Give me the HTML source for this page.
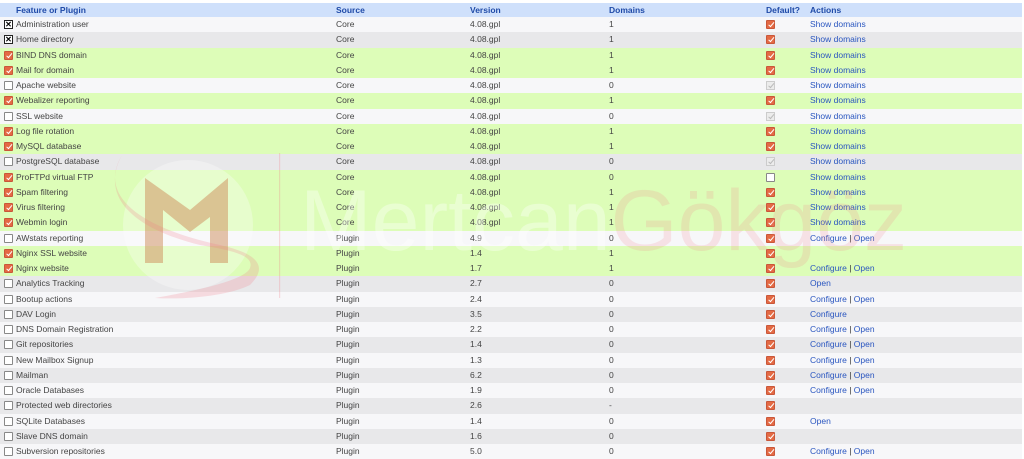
<!DOCTYPE html>
<html><head><meta charset="utf-8">
<style>
body{margin:0;width:1024px;height:458px;background:#fff;font-family:"Liberation Sans",sans-serif;font-size:8.5px;color:#444;position:relative;overflow:hidden}
.r{position:absolute;left:0;width:1022px;height:15.25px;line-height:15px}
.w{background:#f7f7f9}.g{background:#e8e8ea}.gr{background:#ddfdb8}
.h{top:3px;height:14px;line-height:14px;background:#cfe0fb;color:#1f4aa8;font-weight:bold;font-size:8.5px}
.c{position:absolute;white-space:nowrap}
.a{left:16px}.b{left:336px}.v{left:470px}.d{left:609px}.df{left:766px}.ac{left:810px;color:#2a56c0}
.cb{position:absolute;left:4px;top:3px;width:9px;height:9px;box-sizing:border-box}
.cd{left:766px}
.ck{background:#e46a44;border:1px solid #c9573a;border-radius:1px}
.ck:after{content:"";position:absolute;left:2.5px;top:0px;width:2px;height:4.5px;border:solid #fff;border-width:0 1.3px 1.3px 0;transform:rotate(40deg)}
.x{border:1px solid #222;background:#fff;font-size:8px;line-height:7px;text-align:center;font-weight:bold;color:#000}
.e{border:1px solid #888;background:#fff;border-radius:1px}
.dis{background:#ececec;border:1px solid #ccc}
.dis:after{content:"";position:absolute;left:2.5px;top:0px;width:2px;height:4.5px;border:solid #bbb;border-width:0 1.3px 1.3px 0;transform:rotate(40deg)}
.wm{position:absolute;left:300px;top:178px;font-size:86px;line-height:86px;color:rgba(255,255,255,0.35);font-family:"Liberation Sans",sans-serif;pointer-events:none;white-space:nowrap}
</style></head><body>
<div class="r h"><span class="c a">Feature or Plugin</span><span class="c b">Source</span><span class="c v">Version</span><span class="c d">Domains</span><span class="c df">Default?</span><span class="c ac" style="color:#1f4aa8">Actions</span></div>

<div class="r w" style="top:17px"><span class="cb x">✕</span><span class="c a">Administration user</span><span class="c b">Core</span><span class="c v">4.08.gpl</span><span class="c d">1</span><span class="cb cd ck"></span><span class="c ac">Show domains</span></div>
<div class="r g" style="top:32.25px"><span class="cb x">✕</span><span class="c a">Home directory</span><span class="c b">Core</span><span class="c v">4.08.gpl</span><span class="c d">1</span><span class="cb cd ck"></span><span class="c ac">Show domains</span></div>
<div class="r gr" style="top:47.5px"><span class="cb ck"></span><span class="c a">BIND DNS domain</span><span class="c b">Core</span><span class="c v">4.08.gpl</span><span class="c d">1</span><span class="cb cd ck"></span><span class="c ac">Show domains</span></div>
<div class="r gr" style="top:62.75px"><span class="cb ck"></span><span class="c a">Mail for domain</span><span class="c b">Core</span><span class="c v">4.08.gpl</span><span class="c d">1</span><span class="cb cd ck"></span><span class="c ac">Show domains</span></div>
<div class="r w" style="top:78px"><span class="cb e"></span><span class="c a">Apache website</span><span class="c b">Core</span><span class="c v">4.08.gpl</span><span class="c d">0</span><span class="cb cd dis"></span><span class="c ac">Show domains</span></div>
<div class="r gr" style="top:93.25px"><span class="cb ck"></span><span class="c a">Webalizer reporting</span><span class="c b">Core</span><span class="c v">4.08.gpl</span><span class="c d">1</span><span class="cb cd ck"></span><span class="c ac">Show domains</span></div>
<div class="r w" style="top:108.5px"><span class="cb e"></span><span class="c a">SSL website</span><span class="c b">Core</span><span class="c v">4.08.gpl</span><span class="c d">0</span><span class="cb cd dis"></span><span class="c ac">Show domains</span></div>
<div class="r gr" style="top:123.75px"><span class="cb ck"></span><span class="c a">Log file rotation</span><span class="c b">Core</span><span class="c v">4.08.gpl</span><span class="c d">1</span><span class="cb cd ck"></span><span class="c ac">Show domains</span></div>
<div class="r gr" style="top:139px"><span class="cb ck"></span><span class="c a">MySQL database</span><span class="c b">Core</span><span class="c v">4.08.gpl</span><span class="c d">1</span><span class="cb cd ck"></span><span class="c ac">Show domains</span></div>
<div class="r g" style="top:154.25px"><span class="cb e"></span><span class="c a">PostgreSQL database</span><span class="c b">Core</span><span class="c v">4.08.gpl</span><span class="c d">0</span><span class="cb cd dis"></span><span class="c ac">Show domains</span></div>
<div class="r gr" style="top:169.5px"><span class="cb ck"></span><span class="c a">ProFTPd virtual FTP</span><span class="c b">Core</span><span class="c v">4.08.gpl</span><span class="c d">0</span><span class="cb cd e"></span><span class="c ac">Show domains</span></div>
<div class="r gr" style="top:184.75px"><span class="cb ck"></span><span class="c a">Spam filtering</span><span class="c b">Core</span><span class="c v">4.08.gpl</span><span class="c d">1</span><span class="cb cd ck"></span><span class="c ac">Show domains</span></div>
<div class="r gr" style="top:200px"><span class="cb ck"></span><span class="c a">Virus filtering</span><span class="c b">Core</span><span class="c v">4.08.gpl</span><span class="c d">1</span><span class="cb cd ck"></span><span class="c ac">Show domains</span></div>
<div class="r gr" style="top:215.25px"><span class="cb ck"></span><span class="c a">Webmin login</span><span class="c b">Core</span><span class="c v">4.08.gpl</span><span class="c d">1</span><span class="cb cd ck"></span><span class="c ac">Show domains</span></div>
<div class="r w" style="top:230.5px"><span class="cb e"></span><span class="c a">AWstats reporting</span><span class="c b">Plugin</span><span class="c v">4.9</span><span class="c d">0</span><span class="cb cd ck"></span><span class="c ac">Configure <span style="color:#333">|</span> Open</span></div>
<div class="r gr" style="top:245.75px"><span class="cb ck"></span><span class="c a">Nginx SSL website</span><span class="c b">Plugin</span><span class="c v">1.4</span><span class="c d">1</span><span class="cb cd ck"></span></div>
<div class="r gr" style="top:261px"><span class="cb ck"></span><span class="c a">Nginx website</span><span class="c b">Plugin</span><span class="c v">1.7</span><span class="c d">1</span><span class="cb cd ck"></span><span class="c ac">Configure <span style="color:#333">|</span> Open</span></div>
<div class="r g" style="top:276.25px"><span class="cb e"></span><span class="c a">Analytics Tracking</span><span class="c b">Plugin</span><span class="c v">2.7</span><span class="c d">0</span><span class="cb cd ck"></span><span class="c ac">Open</span></div>
<div class="r w" style="top:291.5px"><span class="cb e"></span><span class="c a">Bootup actions</span><span class="c b">Plugin</span><span class="c v">2.4</span><span class="c d">0</span><span class="cb cd ck"></span><span class="c ac">Configure <span style="color:#333">|</span> Open</span></div>
<div class="r g" style="top:306.75px"><span class="cb e"></span><span class="c a">DAV Login</span><span class="c b">Plugin</span><span class="c v">3.5</span><span class="c d">0</span><span class="cb cd ck"></span><span class="c ac">Configure</span></div>
<div class="r w" style="top:322px"><span class="cb e"></span><span class="c a">DNS Domain Registration</span><span class="c b">Plugin</span><span class="c v">2.2</span><span class="c d">0</span><span class="cb cd ck"></span><span class="c ac">Configure <span style="color:#333">|</span> Open</span></div>
<div class="r g" style="top:337.25px"><span class="cb e"></span><span class="c a">Git repositories</span><span class="c b">Plugin</span><span class="c v">1.4</span><span class="c d">0</span><span class="cb cd ck"></span><span class="c ac">Configure <span style="color:#333">|</span> Open</span></div>
<div class="r w" style="top:352.5px"><span class="cb e"></span><span class="c a">New Mailbox Signup</span><span class="c b">Plugin</span><span class="c v">1.3</span><span class="c d">0</span><span class="cb cd ck"></span><span class="c ac">Configure <span style="color:#333">|</span> Open</span></div>
<div class="r g" style="top:367.75px"><span class="cb e"></span><span class="c a">Mailman</span><span class="c b">Plugin</span><span class="c v">6.2</span><span class="c d">0</span><span class="cb cd ck"></span><span class="c ac">Configure <span style="color:#333">|</span> Open</span></div>
<div class="r w" style="top:383px"><span class="cb e"></span><span class="c a">Oracle Databases</span><span class="c b">Plugin</span><span class="c v">1.9</span><span class="c d">0</span><span class="cb cd ck"></span><span class="c ac">Configure <span style="color:#333">|</span> Open</span></div>
<div class="r g" style="top:398.25px"><span class="cb e"></span><span class="c a">Protected web directories</span><span class="c b">Plugin</span><span class="c v">2.6</span><span class="c d">-</span><span class="cb cd ck"></span></div>
<div class="r w" style="top:413.5px"><span class="cb e"></span><span class="c a">SQLite Databases</span><span class="c b">Plugin</span><span class="c v">1.4</span><span class="c d">0</span><span class="cb cd ck"></span><span class="c ac">Open</span></div>
<div class="r g" style="top:428.75px"><span class="cb e"></span><span class="c a">Slave DNS domain</span><span class="c b">Plugin</span><span class="c v">1.6</span><span class="c d">0</span><span class="cb cd ck"></span></div>
<div class="r w" style="top:444px"><span class="cb e"></span><span class="c a">Subversion repositories</span><span class="c b">Plugin</span><span class="c v">5.0</span><span class="c d">0</span><span class="cb cd ck"></span><span class="c ac">Configure <span style="color:#333">|</span> Open</span></div>

<svg style="position:absolute;left:0;top:0" width="1024" height="458" viewBox="0 0 1024 458">
<circle cx="188" cy="225" r="65" fill="rgba(255,255,255,0.3)"/>
<path d="M145 178 L190 210 L228 178 L228 263 L210 263 L210 217 L190 232 L163 210 L163 263 L145 263Z" fill="rgba(205,140,90,0.5)"/>
<path d="M122 155 C95 200 150 230 220 245 C255 253 270 265 250 285 C230 295 190 300 155 298 C200 290 245 280 250 268 C255 255 230 250 200 245 C130 228 100 195 122 155Z" fill="rgba(240,120,130,0.22)"/>
<rect x="279" y="153" width="1.2" height="145" fill="rgba(240,120,130,0.25)"/>
</svg>
<div class="wm">Mertcan<span style="color:rgba(245,130,140,0.18)">Gökgöz</span></div>
</body></html>
